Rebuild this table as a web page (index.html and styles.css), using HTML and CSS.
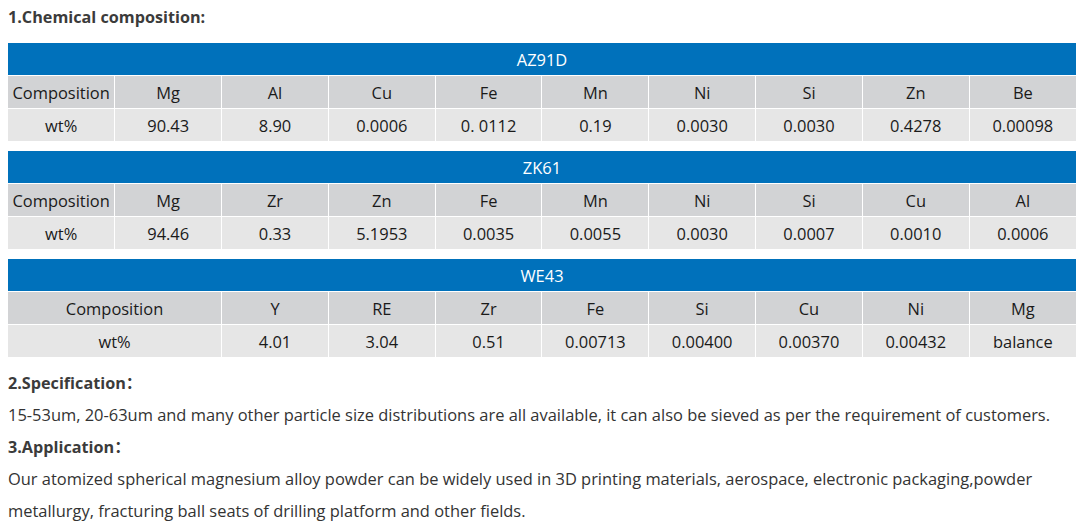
FILE: index.html
```html
<!DOCTYPE html>
<html>
<head>
<meta charset="utf-8">
<link rel="stylesheet" href="styles.css">
</head>
<body>
<p class="heading first">1.Chemical composition:</p>
<table class="comp">
  <tr class="title"><td colspan="10">AZ91D</td></tr>
  <tr class="head"><td>Composition</td><td>Mg</td><td>Al</td><td>Cu</td><td>Fe</td><td>Mn</td><td>Ni</td><td>Si</td><td>Zn</td><td>Be</td></tr>
  <tr class="data"><td>wt%</td><td>90.43</td><td>8.90</td><td>0.0006</td><td>0. 0112</td><td>0.19</td><td>0.0030</td><td>0.0030</td><td>0.4278</td><td>0.00098</td></tr>
</table>
<table class="comp">
  <tr class="title"><td colspan="10">ZK61</td></tr>
  <tr class="head"><td>Composition</td><td>Mg</td><td>Zr</td><td>Zn</td><td>Fe</td><td>Mn</td><td>Ni</td><td>Si</td><td>Cu</td><td>Al</td></tr>
  <tr class="data"><td>wt%</td><td>94.46</td><td>0.33</td><td>5.1953</td><td>0.0035</td><td>0.0055</td><td>0.0030</td><td>0.0007</td><td>0.0010</td><td>0.0006</td></tr>
</table>
<table class="comp">
  <colgroup><col><col><col><col><col><col><col><col><col><col></colgroup>
  <tr class="title"><td colspan="10">WE43</td></tr>
  <tr class="head"><td colspan="2">Composition</td><td>Y</td><td>RE</td><td>Zr</td><td>Fe</td><td>Si</td><td>Cu</td><td>Ni</td><td>Mg</td></tr>
  <tr class="data"><td colspan="2">wt%</td><td>4.01</td><td>3.04</td><td>0.51</td><td>0.00713</td><td>0.00400</td><td>0.00370</td><td>0.00432</td><td>balance</td></tr>
</table>
<p class="heading">2.Specification：</p>
<p class="text">15-53um, 20-63um and many other particle size distributions are all available, it can also be sieved as per the requirement of customers.</p>
<p class="heading">3.Application：</p>
<p class="text">Our atomized spherical magnesium alloy powder can be widely used in 3D printing materials, aerospace, electronic packaging,powder metallurgy, fracturing ball seats of drilling platform and other fields.</p>
</body>
</html>
```
FILE: styles.css
```css
html, body {
  background: #fff;
}
body {
  margin: 0 8px;
  font-family: "Open Sans", "Noto Sans", "Noto Sans CJK SC", sans-serif;
  font-size: 16.45px;
  color: #333;
}
p {
  margin: 0;
  line-height: 32px;
}
.heading {
  font-weight: bold;
  font-size: 16.2px;
  color: #3b3b3b;
}
.heading.first {
  line-height: 34px;
  margin-bottom: 9px;
}
.comp {
  width: 100%;
  border-collapse: collapse;
  table-layout: fixed;
  margin-bottom: 10px;
  color: #1a1a1a;
}
.comp col {
  width: 10%;
}
.comp td {
  border: 1px solid #fff;
  padding: 0;
  height: 32px;
  text-align: center;
  vertical-align: middle;
}
.comp tr:first-child td {
  border-top: none;
}
.comp tr:last-child td {
  border-bottom: none;
}
.comp td:first-child {
  border-left: none;
}
.comp td:last-child {
  border-right: none;
}
.title td {
  background: #0071bb;
  color: #fff;
}
.head td {
  background: #d2d3d5;
}
.data td {
  background: #e6e6e6;
}
.text {
  color: #333;
}
```
